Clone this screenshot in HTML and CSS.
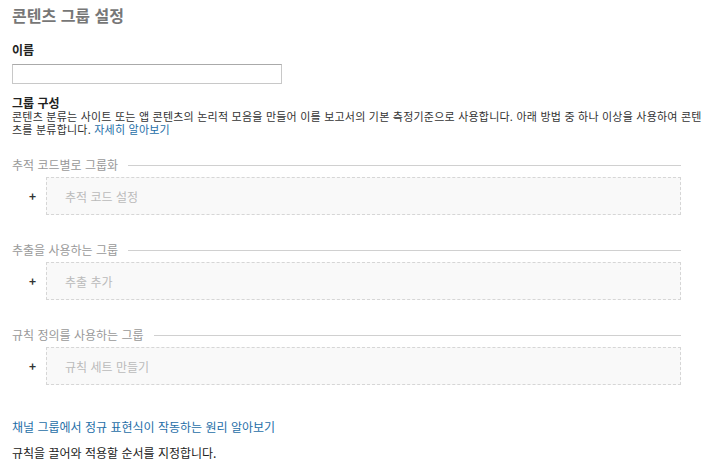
FILE: index.html
```html
<!DOCTYPE html>
<html lang="ko">
<head>
<meta charset="utf-8">
<link rel="stylesheet" href="styles.css">
</head>
<body>
<div class="page">
  <h1 class="title">콘텐츠 그룹 설정</h1>
  <div class="label">이름</div>
  <input class="name-input" type="text">
  <div class="subhead">그룹 구성</div>
  <p class="desc">콘텐츠 분류는 사이트 또는 앱 콘텐츠의 논리적 모음을 만들어 이를 보고서의 기본 측정기준으로 사용합니다. 아래 방법 중 하나 이상을 사용하여 콘텐츠를 분류합니다. <a class="link" href="#">자세히 알아보기</a></p>

  <section class="method">
    <div class="method-head"><span class="method-title">추적 코드별로 그룹화</span><span class="rule"></span></div>
    <div class="method-body"><span class="plus">+</span><div class="drop">추적 코드 설정</div></div>
  </section>
  <section class="method">
    <div class="method-head"><span class="method-title">추출을 사용하는 그룹</span><span class="rule"></span></div>
    <div class="method-body"><span class="plus">+</span><div class="drop">추출 추가</div></div>
  </section>
  <section class="method">
    <div class="method-head"><span class="method-title">규칙 정의를 사용하는 그룹</span><span class="rule"></span></div>
    <div class="method-body"><span class="plus">+</span><div class="drop">규칙 세트 만들기</div></div>
  </section>

  <a class="help-link" href="#">채널 그룹에서 정규 표현식이 작동하는 원리 알아보기</a>
  <p class="note">규칙을 끌어와 적용할 순서를 지정합니다.</p>
</div>
</body>
</html>
```
FILE: styles.css
```css
* { box-sizing: border-box; }
html, body { margin: 0; padding: 0; background: #fff; }
body {
  font-family: "Noto Sans CJK KR", "Noto Sans", sans-serif;
  color: #222;
  font-size: 12px;
}
.page {
  padding: 4px 0 0 12px;
  width: 711px;
}
.title {
  margin: 0;
  font-size: 16px;
  font-weight: 700;
  color: #777;
  line-height: 22px;
}
.label {
  margin-top: 17px;
  font-size: 12px;
  font-weight: 700;
  color: #222;
  line-height: 14px;
}
.name-input {
  display: block;
  margin-top: 7px;
  width: 270px;
  height: 20px;
  border: 1px solid #c8c8c8;
  border-top-color: #aaa;
  padding: 0 4px;
  font: inherit;
}
.subhead {
  margin-top: 12px;
  font-size: 12px;
  font-weight: 700;
  line-height: 14px;
}
.desc {
  margin: 0;
  font-size: 11px;
  letter-spacing: 0.22px;
  line-height: 13px;
  color: #333;
}
.link, .help-link { color: #1e6ea7; text-decoration: none; }
.method { margin-top: 22px; width: 669px; }
.method + .method { margin-top: 28px; }
.method-head {
  display: flex;
  align-items: center;
  gap: 10px;
  color: #999;
  line-height: 14px;
}
.rule { flex: 1; height: 1px; background: #d0d0d0; }
.method-body {
  display: flex;
  align-items: center;
  margin-top: 5px;
}
.plus {
  width: 34px;
  padding-left: 17px;
  font-weight: 700;
  color: #333;
  font-size: 12px;
  line-height: 14px;
}
.drop {
  flex: 1;
  height: 38px;
  border: 1px dashed #d6d6d6;
  background: #f9f9f9;
  color: #bbb;
  display: flex;
  align-items: center;
  padding-left: 18px;
}
.help-link {
  display: block;
  margin-top: 35px;
  line-height: 14px;
}
.note {
  margin: 12px 0 0;
  line-height: 14px;
  color: #222;
}
```
